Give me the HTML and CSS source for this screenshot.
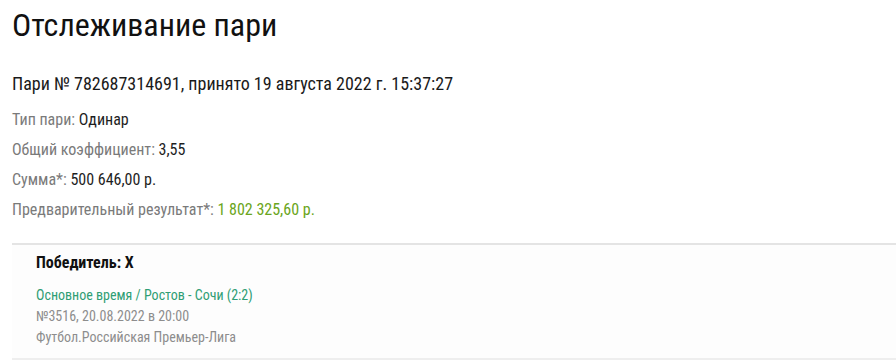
FILE: index.html
```html
<!DOCTYPE html>
<html lang="ru">
<head>
<meta charset="utf-8">
<title>Отслеживание пари</title>
<link rel="stylesheet" href="styles.css">
</head>
<body>
<main class="page">
  <h1 class="title">Отслеживание пари</h1>
  <p class="bet-head">Пари № 782687314691, принято 19 августа 2022 г. 15:37:27</p>
  <ul class="info">
    <li><span class="label">Тип пари:</span> <span class="val">Одинар</span></li>
    <li><span class="label">Общий коэффициент:</span> <span class="val">3,55</span></li>
    <li><span class="label">Сумма*:</span> <span class="val">500 646,00 р.</span></li>
    <li><span class="label">Предварительный результат*:</span> <span class="val win">1 802 325,60 р.</span></li>
  </ul>
  <section class="event">
    <div class="outcome">Победитель: X</div>
    <div class="match">Основное время / Ростов - Сочи (2:2)</div>
    <div class="meta">№3516, 20.08.2022 в 20:00</div>
    <div class="meta">Футбол.Российская Премьер-Лига</div>
  </section>
</main>
</body>
</html>
```
FILE: styles.css
```css
html, body {
  margin: 0;
  padding: 0;
  background: #ffffff;
}
body {
  font-family: Roboto, "Noto Sans", sans-serif;
  font-stretch: condensed;
  color: #222;
}
.page {
  padding-left: 12px;
  overflow: hidden;
}
.title {
  margin: 6px 0 0;
  font-size: 32px;
  line-height: 38px;
  font-weight: 400;
  color: #111;
}
.bet-head {
  margin: 28px 0 0;
  font-size: 18px;
  line-height: 24px;
  color: #1a1a1a;
}
.info {
  list-style: none;
  margin: 9px 0 0;
  padding: 0;
  font-size: 16px;
  line-height: 30px;
}
.label {
  color: #7a7a7a;
}
.val {
  color: #1e1e1e;
}
.val.win {
  color: #6aa520;
}
.event {
  margin-top: 18px;
  border-top: 2px solid #e4e4e4;
  border-bottom: 2px solid #eeeeee;
  background: #fdfdfd;
  padding: 8px 0 10px 24px;
  font-size: 14px;
  line-height: 21px;
}
.outcome {
  font-size: 16px;
  font-weight: 700;
  line-height: 20px;
  color: #111;
  margin-bottom: 12px;
}
.match {
  color: #2f9e74;
}
.meta {
  color: #8d8d8d;
}
```
